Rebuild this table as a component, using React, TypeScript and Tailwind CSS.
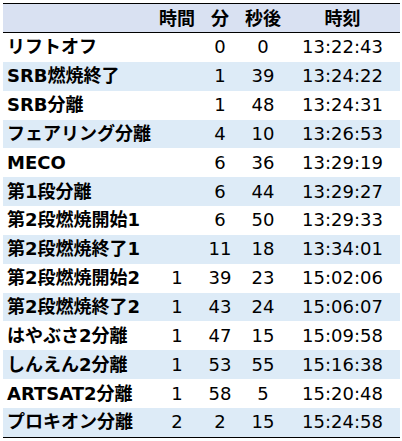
import React from "react";

const rows: [string, string, string, string, string][] = [
  ["リフトオフ", "", "0", "0", "13:22:43"],
  ["SRB燃焼終了", "", "1", "39", "13:24:22"],
  ["SRB分離", "", "1", "48", "13:24:31"],
  ["フェアリング分離", "", "4", "10", "13:26:53"],
  ["MECO", "", "6", "36", "13:29:19"],
  ["第1段分離", "", "6", "44", "13:29:27"],
  ["第2段燃焼開始1", "", "6", "50", "13:29:33"],
  ["第2段燃焼終了1", "", "11", "18", "13:34:01"],
  ["第2段燃焼開始2", "1", "39", "23", "15:02:06"],
  ["第2段燃焼終了2", "1", "43", "24", "15:06:07"],
  ["はやぶさ2分離", "1", "47", "15", "15:09:58"],
  ["しんえん2分離", "1", "53", "55", "15:16:38"],
  ["ARTSAT2分離", "1", "58", "5", "15:20:48"],
  ["プロキオン分離", "2", "2", "15", "15:24:58"],
];

const cols = "grid grid-cols-[152px_44px_42px_44px_1fr]";

export default function App() {
  return (
    <div
      className="w-[402px] h-[441px] bg-white pt-[3px] px-[3px] text-black"
      style={{ fontFamily: '"DejaVu Sans", "Noto Sans CJK JP", sans-serif' }}
    >
      <div className="w-[397px] border-t border-b border-black">
        <div className={`${cols} h-[29px] items-center bg-[#d9e1f2] border-b border-black text-[18px] font-bold`}>
          <div />
          <div className="text-center">時間</div>
          <div className="text-center">分</div>
          <div className="text-center">秒後</div>
          <div className="text-center">時刻</div>
        </div>
        {rows.map((r, i) => (
          <div
            key={i}
            className={`${cols} h-[28.85px] items-center text-[18px] leading-none ${i % 2 === 1 ? "bg-[#ddebf7]" : "bg-white"}`}
          >
            <div className="pl-[4px] font-bold whitespace-nowrap">{r[0]}</div>
            <div className="text-center">{r[1]}</div>
            <div className="text-center">{r[2]}</div>
            <div className="text-center">{r[3]}</div>
            <div className="text-center">{r[4]}</div>
          </div>
        ))}
      </div>
    </div>
  );
}
